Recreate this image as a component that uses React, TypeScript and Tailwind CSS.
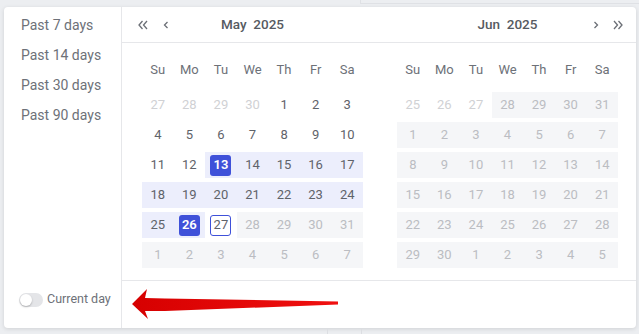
import React from "react";

type Cell = {
  d: number;
  kind: "out" | "normal" | "disabled" | "outDisabled";
  band?: "range" | "gray" | "none";
  sel?: boolean;
  today?: boolean;
};

const WEEK = ["Su", "Mo", "Tu", "We", "Th", "Fr", "Sa"];

function mayRows(): Cell[][] {
  const r: Cell[][] = [];
  r.push([
    { d: 27, kind: "out" },
    { d: 28, kind: "out" },
    { d: 29, kind: "out" },
    { d: 30, kind: "out" },
    { d: 1, kind: "normal" },
    { d: 2, kind: "normal" },
    { d: 3, kind: "normal" },
  ]);
  r.push([4, 5, 6, 7, 8, 9, 10].map((d) => ({ d, kind: "normal" as const })));
  r.push([
    { d: 11, kind: "normal" },
    { d: 12, kind: "normal" },
    { d: 13, kind: "normal", band: "range", sel: true },
    { d: 14, kind: "normal", band: "range" },
    { d: 15, kind: "normal", band: "range" },
    { d: 16, kind: "normal", band: "range" },
    { d: 17, kind: "normal", band: "range" },
  ]);
  r.push([18, 19, 20, 21, 22, 23, 24].map((d) => ({ d, kind: "normal" as const, band: "range" as const })));
  r.push([
    { d: 25, kind: "normal", band: "range" },
    { d: 26, kind: "normal", band: "range", sel: true },
    { d: 27, kind: "normal", today: true },
    { d: 28, kind: "disabled", band: "gray" },
    { d: 29, kind: "disabled", band: "gray" },
    { d: 30, kind: "disabled", band: "gray" },
    { d: 31, kind: "disabled", band: "gray" },
  ]);
  r.push([1, 2, 3, 4, 5, 6, 7].map((d) => ({ d, kind: "disabled" as const, band: "gray" as const })));
  return r;
}

function junRows(): Cell[][] {
  const r: Cell[][] = [];
  r.push([
    { d: 25, kind: "out" },
    { d: 26, kind: "out" },
    { d: 27, kind: "out" },
    { d: 28, kind: "disabled", band: "gray" },
    { d: 29, kind: "disabled", band: "gray" },
    { d: 30, kind: "disabled", band: "gray" },
    { d: 31, kind: "disabled", band: "gray" },
  ]);
  const rows = [
    [1, 2, 3, 4, 5, 6, 7],
    [8, 9, 10, 11, 12, 13, 14],
    [15, 16, 17, 18, 19, 20, 21],
    [22, 23, 24, 25, 26, 27, 28],
    [29, 30, 1, 2, 3, 4, 5],
  ];
  rows.forEach((row) => r.push(row.map((d) => ({ d, kind: "disabled" as const, band: "gray" as const }))));
  return r;
}

function DayCell({ c }: { c: Cell }) {
  const band =
    c.band === "range" ? "bg-[#eceefc]" : c.band === "gray" ? "bg-[#f5f6f8]" : "bg-transparent";
  const color =
    c.kind === "out"
      ? "text-[#d0d1d4]"
      : c.kind === "disabled"
      ? "text-[#bbbdc2]"
      : "text-[#5f636a]";
  return (
    <div className={`h-[26px] flex items-center justify-center ${band}`}>
      {c.sel ? (
        <div className="w-[21px] h-[21px] rounded-[3px] bg-[#3f51d9] text-white font-semibold flex items-center justify-center">
          {c.d}
        </div>
      ) : c.today ? (
        <div className="w-[21px] h-[21px] rounded-[3px] border border-[#3f51d9] text-[#5f636a] flex items-center justify-center">
          {c.d}
        </div>
      ) : (
        <span className={color}>{c.d}</span>
      )}
    </div>
  );
}

function Month({ rows }: { rows: Cell[][] }) {
  return (
    <div className="w-[221px] flex flex-col text-[13px]">
      <div className="grid grid-cols-7 h-[30px] items-center text-[#6d7178]">
        {WEEK.map((w) => (
          <div key={w} className="text-center">
            {w}
          </div>
        ))}
      </div>
      <div className="mt-[5px] flex flex-col">
        {rows.map((row, i) => (
          <div key={i} className="grid grid-cols-7 h-[30px] py-[2px]">
            {row.map((c, j) => (
              <DayCell key={j} c={c} />
            ))}
          </div>
        ))}
      </div>
    </div>
  );
}

function DoubleLeft() {
  return (
    <svg width="10" height="10" viewBox="0 0 10 10" fill="none" stroke="#6b6f76" strokeWidth="1.3">
      <polyline points="4.5,1 1,5 4.5,9" />
      <polyline points="9,1 5.5,5 9,9" />
    </svg>
  );
}
function DoubleRight() {
  return (
    <svg width="10" height="10" viewBox="0 0 10 10" fill="none" stroke="#6b6f76" strokeWidth="1.3">
      <polyline points="1,1 4.5,5 1,9" />
      <polyline points="5.5,1 9,5 5.5,9" />
    </svg>
  );
}
function SingleLeft() {
  return (
    <svg width="6" height="8" viewBox="0 0 6 8" fill="none" stroke="#6b6f76" strokeWidth="1.3">
      <polyline points="4.5,1 1.5,4 4.5,7" />
    </svg>
  );
}
function SingleRight() {
  return (
    <svg width="6" height="8" viewBox="0 0 6 8" fill="none" stroke="#6b6f76" strokeWidth="1.3">
      <polyline points="1.5,1 4.5,4 1.5,7" />
    </svg>
  );
}

export default function App() {
  return (
    <div
      className="relative w-[639px] h-[334px] bg-[#eceef1] overflow-hidden"
      style={{ fontFamily: "Roboto, 'Liberation Sans', sans-serif" }}
    >
      {/* backdrop hints */}
      <div className="absolute left-[360px] top-[3px] right-0 h-px bg-[#dfe1e5]" />
      <div className="absolute left-[360px] top-0 w-px h-[4px] bg-[#dfe1e5]" />
      <div className="absolute left-[327px] bottom-0 w-px h-[5px] bg-[#dcdee2]" />
      <div className="absolute left-[361px] bottom-0 w-px h-[5px] bg-[#dcdee2]" />

      <div className="ml-[4px] mt-[7px] w-[632px] h-[321px] bg-white rounded-[4px] shadow-[0_1px_4px_rgba(0,0,0,0.12)] flex">
        {/* sidebar */}
        <div className="w-[120px] border-r border-[#e6e7ea] flex flex-col justify-between">
          <div className="pt-[3px] pl-[17px] text-[14px] text-[#6d7178]">
            <div className="h-[30px] leading-[30px]">Past 7 days</div>
            <div className="h-[30px] leading-[30px]">Past 14 days</div>
            <div className="h-[30px] leading-[30px]">Past 30 days</div>
            <div className="h-[30px] leading-[30px]">Past 90 days</div>
          </div>
          <div className="pl-[15px] pb-[19px] flex items-center gap-[4px]">
            <div className="w-[24px] h-[14px] rounded-full bg-[#e4e5e8] relative">
              <div className="absolute left-[1px] top-[1px] w-[12px] h-[12px] rounded-full bg-white shadow-[0_1px_2px_rgba(0,0,0,0.25)]" />
            </div>
            <span className="text-[12.5px] text-[#6d7178]">Current day</span>
          </div>
        </div>

        {/* main */}
        <div className="flex-1 flex flex-col">
          <div className="h-[36px] border-b border-[#e6e7ea] flex pl-[20px] pr-[18px] gap-[34px]">
            <div className="w-[221px] relative flex items-center justify-center">
              <div className="absolute left-[-4px] top-0 h-full flex items-center gap-[15px]">
                <DoubleLeft />
                <SingleLeft />
              </div>
              <span className="text-[13.5px] font-medium text-[#565a61] whitespace-pre">May  2025</span>
            </div>
            <div className="w-[221px] relative flex items-center justify-center">
              <span className="text-[13.5px] font-medium text-[#565a61] whitespace-pre">Jun  2025</span>
              <div className="absolute right-[-5px] top-0 h-full flex items-center gap-[14px]">
                <SingleRight />
                <DoubleRight />
              </div>
            </div>
          </div>
          <div className="h-[237px] pt-[12px] pl-[20px] pr-[18px] flex gap-[34px]">
            <Month rows={mayRows()} />
            <Month rows={junRows()} />
          </div>
          <div className="flex-1 border-t border-[#e6e7ea]" />
        </div>
      </div>

      {/* red annotation arrow */}
      <svg className="absolute left-0 top-0" width="639" height="334" viewBox="0 0 639 334">
        <defs>
          <linearGradient id="ag" x1="0" x2="1" y1="0" y2="0">
            <stop offset="0" stopColor="#d60000" />
            <stop offset="1" stopColor="#f01010" />
          </linearGradient>
        </defs>
        <polygon
          points="132,304 147,289 145,298 165,298.5 338,301.5 338,304.5 165,311 145,311 148,319"
          fill="url(#ag)"
        />
      </svg>
    </div>
  );
}
